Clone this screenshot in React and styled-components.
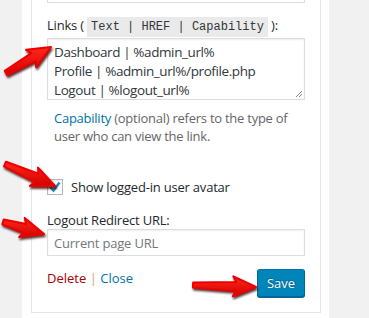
import styled, { createGlobalStyle } from "styled-components";

const GlobalStyle = createGlobalStyle`
  body {
    margin: 0;
    background: #f1f1f1;
    font-family: "Open Sans", "Noto Sans", sans-serif;
    overflow: hidden;
  }
`;

const Page = styled.div`
  position: relative;
  width: 369px;
  height: 318px;
  overflow: hidden;
  display: flex;
  padding-left: 22px;
  box-sizing: border-box;
`;

const Widget = styled.div`
  width: 307px;
  background: #fff;
  padding: 0 8px 0 9px;
  box-sizing: border-box;
`;

const Inside = styled.div`
  margin-top: -60px;
  border: 1px solid #e5e5e5;
  padding: 0 15px 15px;
  color: #23282d;
  font-size: 13px;
`;

const TextArea = styled.div`
  border: 1px solid #ddd;
  box-shadow: inset 0 1px 2px rgba(0, 0, 0, 0.07);
  height: ${(p) => p.$h}px;
  box-sizing: border-box;
  position: relative;
  padding: 4px 6px;
  font-size: 13.5px;
  letter-spacing: -0.4px;
  line-height: 19px;
  color: #32373c;
`;

const Grip = styled.svg`
  position: absolute;
  right: 1px;
  bottom: 1px;
`;

const Label = styled.p`
  margin: ${(p) => p.$mt}px 0 ${(p) => p.$mb}px;
  font-size: 13px;
  letter-spacing: -0.2px;
  line-height: ${(p) => p.$lh}px;
  color: #23282d;
`;

const Code = styled.code`
  font-family: "Liberation Mono", monospace;
  font-size: 12px;
  letter-spacing: 0;
  background: #eaeaea;
  padding: 3px 4px 3px;
  color: #32373c;
`;

const Help = styled.p`
  margin: 9px 0 0;
  padding-left: 7px;
  font-size: 13px;
  letter-spacing: -0.25px;
  line-height: 18px;
  color: #666;
`;

const Link = styled.a`
  color: ${(p) => (p.$danger ? "#a00" : "#0073aa")};
  text-decoration: none;
`;

const CheckRow = styled.label`
  margin-top: 32px;
  height: 20px;
  display: flex;
  align-items: center;
  gap: 8px;
  font-size: 13px;
  letter-spacing: -0.2px;
  color: #23282d;
`;

const Box = styled.span`
  width: 16px;
  height: 16px;
  box-sizing: border-box;
  border: 1px solid #b4b9be;
  box-shadow: inset 0 1px 2px rgba(0, 0, 0, 0.1);
  display: flex;
  align-items: center;
  justify-content: center;
`;

const Input = styled.div`
  border: 1px solid #ddd;
  box-shadow: inset 0 1px 2px rgba(0, 0, 0, 0.07);
  height: 27px;
  box-sizing: border-box;
  padding: 0 6px;
  display: flex;
  align-items: center;
  font-size: 13px;
  letter-spacing: -0.2px;
  color: #72777c;
`;

const Actions = styled.div`
  margin-top: 13px;
  display: flex;
  justify-content: space-between;
  align-items: flex-start;
`;

const Links = styled.div`
  font-size: 13px;
  line-height: 18px;
`;

const Sep = styled.span`
  color: #d9a35c;
`;

const SaveButton = styled.button`
  width: 48px;
  height: 28px;
  background: #0085ba;
  border: 1px solid #0073aa;
  border-color: #0073aa #006799 #006799;
  border-radius: 3px;
  box-shadow: 0 1px 0 #006799;
  color: #fff;
  font-family: inherit;
  font-size: 13px;
  text-shadow: 0 -1px 1px #006799, 1px 0 1px #006799;
  padding: 0;
`;

const Overlay = styled.svg`
  position: absolute;
  left: 0;
  top: 0;
  pointer-events: none;
`;

function arrowPoints(x1, y1, x2, y2) {
  const dx = x2 - x1;
  const dy = y2 - y1;
  const len = Math.hypot(dx, dy);
  const ux = dx / len;
  const uy = dy / len;
  const nx = -uy;
  const ny = ux;
  const head = 20;
  const hw = 10;
  const bx = x2 - ux * head;
  const by = y2 - uy * head;
  const t = 2.5;
  const s = 4.5;
  const pts = [
    [x1 + nx * t, y1 + ny * t],
    [bx + nx * s, by + ny * s],
    [bx + nx * hw - ux * 3, by + ny * hw - uy * 3],
    [x2, y2],
    [bx - nx * hw - ux * 3, by - ny * hw - uy * 3],
    [bx - nx * s, by - ny * s],
    [x1 - nx * t, y1 - ny * t],
  ];
  return pts.map((p) => p.map((v) => v.toFixed(1)).join(",")).join(" ");
}

const arrows = [
  [6, 73, 51, 47],
  [5, 164, 55, 186],
  [3, 222, 44, 234],
  [193, 285, 256, 287],
];

function Arrows() {
  return (
    <Overlay width="369" height="318">
      <defs>
        <linearGradient id="red" x1="0" y1="0" x2="0" y2="1">
          <stop offset="0" stopColor="#ff2a1a" />
          <stop offset="1" stopColor="#d40000" />
        </linearGradient>
        <filter id="sh" x="-20%" y="-40%" width="140%" height="180%">
          <feGaussianBlur stdDeviation="1.2" />
        </filter>
      </defs>
      {arrows.map((a, i) => (
        <g key={i}>
          <polygon
            points={arrowPoints(...a)}
            fill="#300"
            opacity="0.8"
            transform="translate(1 2)"
            filter="url(#sh)"
            strokeLinejoin="round"
            stroke="#300"
            strokeWidth="2"
          />
          <polygon
            points={arrowPoints(...a)}
            fill="url(#red)"
            stroke="#ee0000"
            strokeWidth="2"
            strokeLinejoin="round"
          />
        </g>
      ))}
    </Overlay>
  );
}

export default function App() {
  return (
    <>
      <GlobalStyle />
      <Page>
        <Widget>
          <Inside>
            <TextArea $h={62} />
            <Label $mt={12} $mb={1} $lh={20}>
              Links ( <Code>Text | HREF | Capability</Code> ):
            </Label>
            <TextArea $h={62}>
              Dashboard | %admin_url%
              <br />
              Profile | %admin_url%/profile.php
              <br />
              Logout | %logout_url%
              <Grip width="8" height="8" viewBox="0 0 8 8">
                <path d="M7 1L1 7M7 4L4 7" stroke="#888" strokeWidth="1" />
              </Grip>
            </TextArea>
            <Help>
              <Link>Capability</Link> (optional) refers to the type of user
              who can view the link.
            </Help>
            <CheckRow>
              <Box>
                <svg width="14" height="14" viewBox="0 0 14 14">
                  <path
                    d="M2.5 7.2L5.5 10.5L11.5 2.5"
                    fill="none"
                    stroke="#1e8cbe"
                    strokeWidth="2.4"
                  />
                </svg>
              </Box>
              Show logged-in user avatar
            </CheckRow>
            <Label $mt={14} $mb={0} $lh={18}>
              Logout Redirect URL:
            </Label>
            <Input>Current page URL</Input>
            <Actions>
              <Links>
                <Link $danger>Delete</Link> <Sep>|</Sep> <Link>Close</Link>
              </Links>
              <SaveButton>Save</SaveButton>
            </Actions>
          </Inside>
        </Widget>
        <Arrows />
      </Page>
    </>
  );
}
